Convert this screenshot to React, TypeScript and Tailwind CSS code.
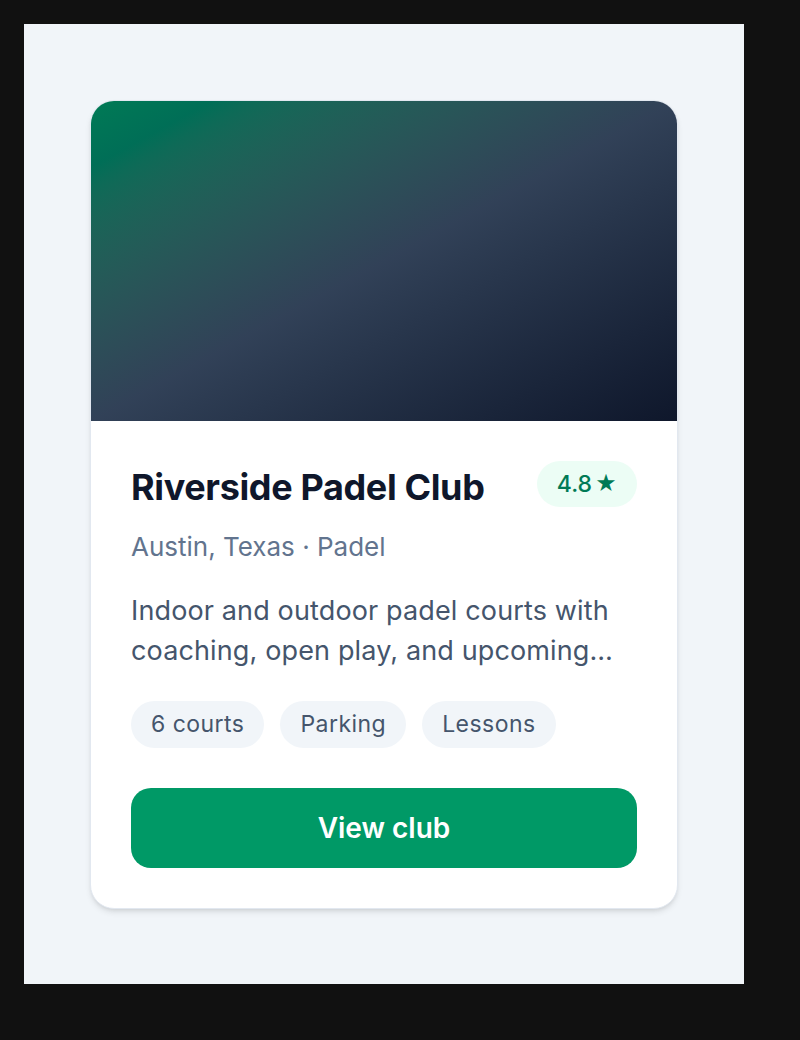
export default function App() {
  const tags = ['6 courts', 'Parking', 'Lessons']

  return (
    <div className="min-h-[1040px] bg-[#111111] p-6 pr-14 pb-14" style={{ fontFamily: 'Inter, "Noto Sans", sans-serif' }}>
      <div className="flex h-[960px] w-[720px] items-start justify-center bg-slate-100 pt-[76px]">
        {/* card */}
        <div className="w-[588px] overflow-hidden rounded-3xl border border-slate-200 bg-white shadow-md">
          <div className="h-[320px] bg-gradient-to-br from-emerald-700 via-slate-700 to-slate-900" />

          <div className="px-10 pt-10 pb-10">
            <div className="flex items-center justify-between">
              <h2 className="text-[36px] font-bold leading-[46px] tracking-[-0.01em] text-slate-900 translate-y-[3px]">
                Riverside Padel Club
              </h2>
              <span className="flex h-[46px] items-center gap-[3px] rounded-full bg-emerald-50 px-5 text-[23px] font-medium text-emerald-700">
                4.8<span className="text-[21px]">★</span>
              </span>
            </div>

            <p className="mt-6 text-[26px] leading-8 text-slate-500">Austin, Texas · Padel</p>

            <p className="mt-7 line-clamp-2 text-[27px] leading-[40px] tracking-[0.005em] text-slate-600">
              Indoor and outdoor padel courts with coaching, open play, and upcoming tournaments every weekend.
            </p>

            <div className="mt-[30px] flex gap-4">
              {tags.map(t => (
                <span
                  key={t}
                  className="flex h-[47px] items-center rounded-full bg-slate-100 px-5 text-[23px] tracking-[0.02em] text-slate-600"
                >
                  {t}
                </span>
              ))}
            </div>

            <button className="mt-10 flex h-20 w-full items-center justify-center rounded-[20px] bg-emerald-600 text-[28px] font-semibold text-white">
              View club
            </button>
          </div>
        </div>
      </div>
    </div>
  )
}
